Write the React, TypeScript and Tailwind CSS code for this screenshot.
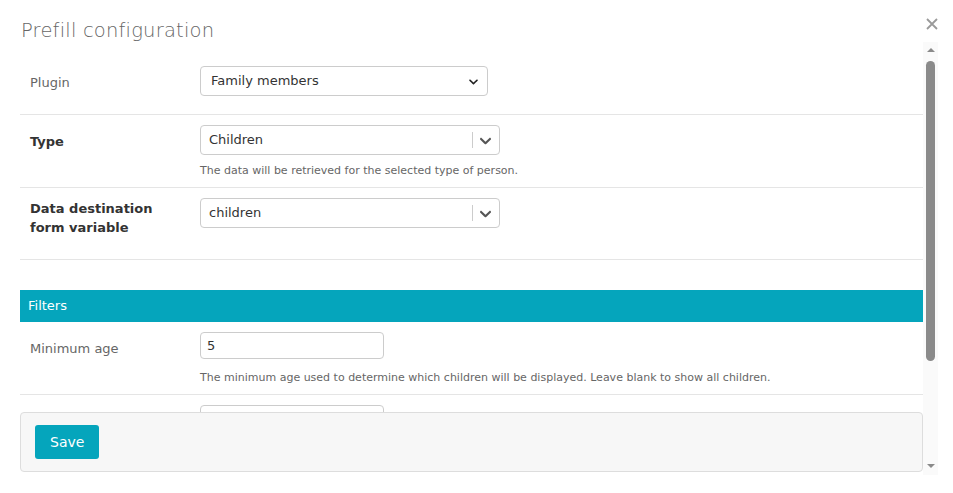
import React from "react";

const font = { fontFamily: '"DejaVu Sans", "Liberation Sans", sans-serif' };

function Chevron({ size = 20, color = "#555" }: { size?: number; color?: string }) {
  return (
    <svg width={size} height={size} viewBox="0 0 20 20" fill={color} aria-hidden>
      <path d="M4.516 7.548c0.436-0.446 1.043-0.481 1.576 0l3.908 3.747 3.908-3.747c0.533-0.481 1.141-0.446 1.574 0 0.436 0.445 0.408 1.197 0 1.615-0.406 0.418-4.695 4.502-4.695 4.502-0.217 0.223-0.502 0.335-0.787 0.335s-0.57-0.112-0.789-0.335c0 0-4.287-4.084-4.695-4.502s-0.436-1.17 0-1.615z" />
    </svg>
  );
}

function ReactSelect({ value }: { value: string }) {
  return (
    <div className="flex h-[30px] w-[300px] items-center rounded-[4px] border border-[#cccccc] bg-white">
      <span className="flex-1 pl-[8px] text-[13px] text-[#333]">{value}</span>
      <span className="h-[16px] w-px bg-[#cccccc]" />
      <span className="flex w-[26px] items-center justify-center pr-[2px]">
        <Chevron size={19} color="#555" />
      </span>
    </div>
  );
}

function Row({
  label,
  bold,
  children,
  help,
  className = "",
  labelClass = "pt-[7px]",
  helpClass = "mt-[9px]",
}: {
  label: React.ReactNode;
  bold?: boolean;
  children: React.ReactNode;
  help?: string;
  className?: string;
  labelClass?: string;
  helpClass?: string;
}) {
  return (
    <div className={`flex border-b border-[#e5e5e5] pt-[10px] ${className}`}>
      <div
        className={`w-[180px] shrink-0 pl-[10px] text-[13px] leading-[19px] ${labelClass} ${
          bold ? "font-bold text-[#333]" : "text-[#666]"
        }`}
      >
        {label}
      </div>
      <div className="flex flex-col">
        {children}
        {help && <p className={`text-[11px] leading-[14px] text-[#666] ${helpClass}`}>{help}</p>}
      </div>
    </div>
  );
}

export default function App() {
  return (
    <div className="relative h-[493px] w-[953px] overflow-hidden bg-white" style={font}>
      {/* header */}
      <div className="flex h-[56px] items-start justify-between pl-[21px] pr-[15px] pt-[18px]">
        <h1 className="mt-[1px] text-[19.5px] font-light leading-[24px] tracking-[0.2px] text-[#666]">
          Prefill configuration
        </h1>
        <svg width="12" height="12" viewBox="0 0 12 12" aria-hidden>
          <path d="M1 1L11 11M11 1L1 11" stroke="#9a9a9a" strokeWidth="1.8" />
        </svg>
      </div>

      <div className="flex">
        {/* body */}
        <div className="ml-[20px] w-[903px]">
          <div className="h-[356px] overflow-hidden">
            <Row label="Plugin" className="h-[59px]">
              <div className="flex h-[30px] w-[288px] items-center rounded-[4px] border border-[#cccccc] bg-white pl-[10px] pr-[6px]">
                <span className="flex-1 text-[13px] text-[#333]">Family members</span>
                <Chevron size={15} color="#222" />
              </div>
            </Row>
            <Row
              label="Type"
              bold
              className="h-[73px]"
              help="The data will be retrieved for the selected type of person."
            >
              <ReactSelect value="Children" />
            </Row>
            <Row
              label={
                <>
                  Data destination
                  <br />
                  form variable
                </>
              }
              bold
              className="h-[72px]"
              labelClass="pt-[1px]"
            >
              <ReactSelect value="children" />
            </Row>

            <div className="mt-[30px] flex h-[32px] items-center bg-[#05a5bc] pl-[8px] text-[13px] text-white">
              Filters
            </div>

            <Row
              label="Minimum age"
              className="h-[73px]"
              labelClass="pt-[7px]"
              helpClass="mt-[12px]"
              help="The minimum age used to determine which children will be displayed. Leave blank to show all children."
            >
              <div className="flex h-[27px] w-[184px] items-center rounded-[4px] border border-[#cccccc] bg-white pl-[6px] text-[13px] text-[#333]">
                5
              </div>
            </Row>
            <Row label="">
              <div className="h-[27px] w-[184px] rounded-[4px] border border-[#cccccc] bg-white" />
            </Row>
          </div>

          {/* footer */}
          <div className="flex h-[60px] items-start rounded-[4px] border border-[#dddddd] bg-[#f7f7f7] pl-[14px] pt-[12px]">
            <button className="h-[34px] rounded-[3px] bg-[#05a5bc] px-[15px] text-[14px] text-white">Save</button>
          </div>
        </div>

        {/* scrollbar */}
        <div className="-mt-[14px] flex h-[433px] w-[15px] flex-col items-center bg-[#fafafa]">
          <svg width="8" height="6" viewBox="0 0 8 6" className="mt-[5px]" aria-hidden>
            <path d="M0 5L4 1L8 5Z" fill="#8a8a8a" />
          </svg>
          <div className="mt-[8px] h-[300px] w-[9px] rounded-full bg-[#8a8a8a]" />
          <div className="flex-1" />
          <svg width="8" height="6" viewBox="0 0 8 6" className="mb-[6px]" aria-hidden>
            <path d="M0 1L4 5L8 1Z" fill="#8a8a8a" />
          </svg>
        </div>
      </div>
    </div>
  );
}
